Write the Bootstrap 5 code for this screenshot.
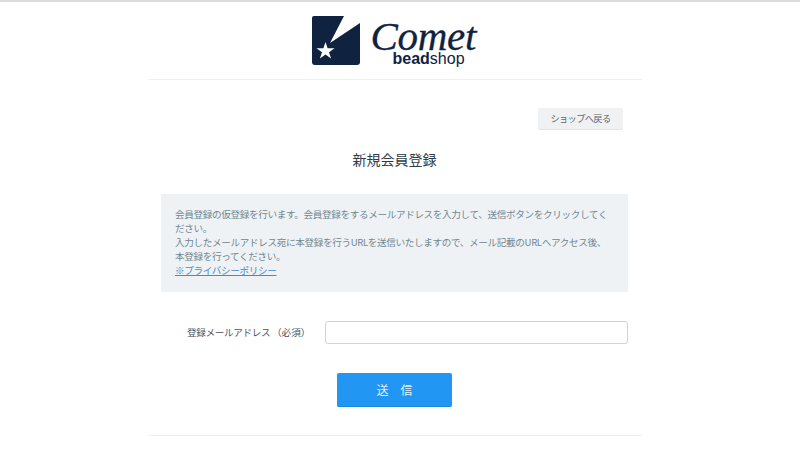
<!DOCTYPE html>
<html lang="ja">
<head>
<meta charset="utf-8">
<title>新規会員登録</title>
<link href="https://cdn.jsdelivr.net/npm/bootstrap@5.3.0/dist/css/bootstrap.min.css" rel="stylesheet">
<style>
html,body{height:100%;overflow:hidden}
body{background:#fff;border-top:2px solid #dcdcdc;font-family:"Noto Sans CJK JP","Liberation Sans",sans-serif;color:#525a60;padding-right:10px}
.shell{width:494px}
.masthead{height:78px;border-bottom:1px solid #eef0f2;padding-top:14px}
.logo-mark{width:48px;height:49px;display:block;flex-shrink:0}
.logo-words{width:108px;margin-left:11px;height:50px}
.logo-c{font-family:"Liberation Serif",serif;font-style:italic;font-size:41px;line-height:30px;color:#0f2340;letter-spacing:-.3px;display:block;margin-top:4.5px;-webkit-text-stroke:.3px #0f2340}
.logo-b{font-family:"Liberation Sans",sans-serif;font-size:16px;line-height:15px;color:#0f2340;display:block;margin-left:22px;margin-top:0}
.back-row{padding-top:28px;padding-right:19px}
.back-btn{width:85px;height:22px;background:#eff1f3;border:0;border-bottom:1px solid #e2e5e8;border-radius:2px;font-size:9.2px;letter-spacing:-.6px;line-height:21px;color:#5f676d;padding:0;text-align:center}
.page-title{font-size:14px;line-height:20px;font-weight:400;color:#2f3b45;margin:19px 1px 0 0;text-align:center}
.notice{margin:25px 14px 0 13px;height:98px;background:#eff2f4;padding:13px 14px 0;font-size:9.6px;letter-spacing:-.35px;line-height:14px;color:#6f8791}
.notice a{color:#4a89c8}
.field-row{margin:29px 14px 0 13px}
.field-label{width:164px;flex-shrink:0;font-size:9.6px;letter-spacing:-.35px;color:#4d5359;padding-left:26px;line-height:23px;white-space:nowrap}
.req-note{letter-spacing:0}
.field-input{height:23px;min-width:0;border:1px solid #cdd5dc;border-radius:3px;padding:0 6px;font-size:10px;box-shadow:none}
.send-row{margin-top:29px;padding-left:189px}
.send-btn{width:115px;height:34px;background:#2196f3;border:0;border-bottom:1px solid #1a87de;border-radius:2px;color:#e3f2fd;font-size:12px;line-height:33px;padding:0}
.foot-rule{margin-top:28px;border-top:1px solid #eef0f2}
</style>
</head>
<body>
<div class="shell mx-auto">
  <header class="masthead d-flex justify-content-center align-items-start">
    <svg class="logo-mark" viewBox="0 0 48 49" aria-label="Comet logo">
      <path d="M2 0H32L18 27 48 7V46Q48 49 45 49H3Q0 49 0 46V2Q0 0 2 0Z" fill="#0f2340"/>
      <polygon points="13.5,26 15.6,32.2 22.5,32.2 17,36.2 19.1,42.5 13.5,38.6 7.9,42.5 10,36.2 4.5,32.2 11.4,32.2" fill="#fff"/>
    </svg>
    <div class="logo-words">
      <span class="logo-c">Comet</span>
      <span class="logo-b"><b>bead</b>shop</span>
    </div>
  </header>
  <div class="back-row d-flex justify-content-end">
    <button type="button" class="btn back-btn">ショップへ戻る</button>
  </div>
  <h1 class="page-title">新規会員登録</h1>
  <div class="notice">
    会員登録の仮登録を行います。会員登録をするメールアドレスを入力して、送信ボタンをクリックしてください。<br>
    入力したメールアドレス宛に本登録を行うURLを送信いたしますので、メール記載のURLへアクセス後、本登録を行ってください。<br>
    <a href="#">※プライバシーポリシー</a>
  </div>
  <form>
    <div class="field-row d-flex align-items-center">
      <label class="field-label" for="mail">登録メールアドレス&nbsp;<span class="req-note">（必須）</span></label>
      <input id="mail" type="email" class="form-control field-input flex-grow-1">
    </div>
    <div class="send-row">
      <button type="button" class="btn send-btn">送　信</button>
    </div>
  </form>
  <div class="foot-rule"></div>
</div>
</body>
</html>
